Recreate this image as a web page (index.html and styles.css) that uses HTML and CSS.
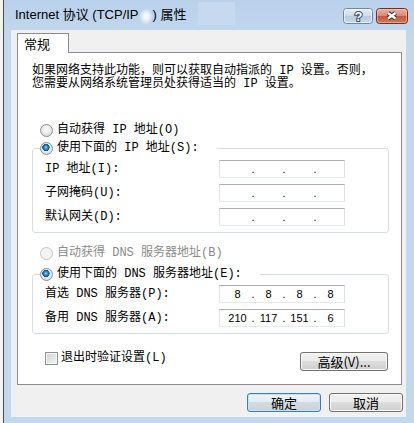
FILE: index.html
```html
<!DOCTYPE html>
<html lang="zh-CN">
<head>
    <meta charset="UTF-8">
    <title>Internet 协议 (TCP/IP) 属性</title>
    <link rel="stylesheet" href="styles.css">
</head>
<body>
<div class="window">
    <div class="titlebar">
        <span class="title">Internet 协议 (TCP/IP<span class="smudge"></span>) 属性</span>
        <span class="haze"></span>
        <span class="caption-btns">
            <span class="cap-btn">
                <svg width="30" height="16" viewBox="0 0 30 16">
                    <defs>
                        <linearGradient id="hg" x1="0" y1="0" x2="0" y2="1">
                            <stop offset="0" stop-color="#e6eef8"/>
                            <stop offset=".48" stop-color="#cfdcec"/>
                            <stop offset=".52" stop-color="#b6cae2"/>
                            <stop offset="1" stop-color="#cbdaed"/>
                        </linearGradient>
                    </defs>
                    <rect x=".5" y=".5" width="29" height="15" rx="3" fill="url(#hg)" stroke="#6f86a3"/>
                    <rect x="1.5" y="1.5" width="27" height="13" rx="2" fill="none" stroke="#fff" stroke-opacity=".6"/>
                    <text x="15.5" y="12.5" text-anchor="middle" font-family="Liberation Sans" font-weight="bold" font-size="13" fill="#fff" stroke="#3d4a5c" stroke-width="2" paint-order="stroke">?</text>
                </svg>
            </span>
            <span class="cap-btn">
                <svg width="32" height="16" viewBox="0 0 32 16">
                    <defs>
                        <linearGradient id="cg" x1="0" y1="0" x2="0" y2="1">
                            <stop offset="0" stop-color="#ebb3a6"/>
                            <stop offset=".48" stop-color="#d98a78"/>
                            <stop offset=".52" stop-color="#c65841"/>
                            <stop offset="1" stop-color="#d77a55"/>
                        </linearGradient>
                    </defs>
                    <rect x=".5" y=".5" width="31" height="15" rx="3" fill="url(#cg)" stroke="#6e3129"/>
                    <rect x="1.5" y="1.5" width="29" height="13" rx="2" fill="none" stroke="#f7d0c6" stroke-opacity=".5"/>
                    <path d="M12 5 L19.5 10.5 M19.5 5 L12 10.5" stroke="#43231e" stroke-width="4.4"/>
                    <path d="M12 5 L19.5 10.5 M19.5 5 L12 10.5" stroke="#fff" stroke-width="2.4"/>
                </svg>
            </span>
        </span>
    </div>
    <div class="client">
        <div class="tabs"><span class="tab">常规</span></div>
        <div class="panel">
            <p class="desc">如果网络支持此功能，则可以获取自动指派的 IP 设置。否则，<br>您需要从网络系统管理员处获得适当的 IP 设置。</p>

            <label class="opt first"><span class="radio"></span>自动获得 IP 地址(O)</label>
            <fieldset class="group ip">
                <legend><label class="opt"><span class="radio on"></span>使用下面的 IP 地址(S):</label></legend>
                <div class="field"><span>IP 地址(I):</span><span class="ipbox"><span class="seg"></span><span class="dot">.</span><span class="seg"></span><span class="dot">.</span><span class="seg"></span><span class="dot">.</span><span class="seg"></span></span></div>
                <div class="field"><span>子网掩码(U):</span><span class="ipbox"><span class="seg"></span><span class="dot">.</span><span class="seg"></span><span class="dot">.</span><span class="seg"></span><span class="dot">.</span><span class="seg"></span></span></div>
                <div class="field"><span>默认网关(D):</span><span class="ipbox"><span class="seg"></span><span class="dot">.</span><span class="seg"></span><span class="dot">.</span><span class="seg"></span><span class="dot">.</span><span class="seg"></span></span></div>
            </fieldset>

            <label class="opt off dns-auto"><span class="radio off"></span>自动获得 DNS 服务器地址(B)</label>
            <fieldset class="group dns">
                <legend><label class="opt"><span class="radio on"></span>使用下面的 DNS 服务器地址(E):</label></legend>
                <div class="field"><span>首选 DNS 服务器(P):</span><span class="ipbox"><span class="seg">8</span><span class="dot">.</span><span class="seg">8</span><span class="dot">.</span><span class="seg">8</span><span class="dot">.</span><span class="seg">8</span></span></div>
                <div class="field"><span>备用 DNS 服务器(A):</span><span class="ipbox"><span class="seg">210</span><span class="dot">.</span><span class="seg">117</span><span class="dot">.</span><span class="seg">151</span><span class="dot">.</span><span class="seg">6</span></span></div>
            </fieldset>

            <div class="panel-foot">
                <label class="check"><span class="box"></span>退出时验证设置(L)</label>
                <button class="btn adv">高级(V)...</button>
            </div>
        </div>
        <div class="actions">
            <button class="btn default">确定</button>
            <button class="btn">取消</button>
        </div>
    </div>
</div>
</body>
</html>
```

FILE: styles.css
```css
body {
    margin: 0;
    width: 414px;
    height: 423px;
    overflow: hidden;
    background: #f3f3f3;
    color: #000;
    font: 12px/16px "Liberation Mono", "Noto Sans CJK SC", monospace;
}

/* window frame */
.window {
    margin-left: 3px;
    height: 423px;
    border-left: 1px solid #4b4b4b;
    background: linear-gradient(#b9d1ea, #c3d8ee 40px, #c2d8ee);
}
.titlebar {
    display: flex;
    align-items: center;
    height: 28px;
    padding: 2px 6px 0 11px;
    font: 13px/16px "Liberation Sans", "Noto Sans CJK SC", sans-serif;
    white-space: nowrap;
}
.smudge {
    display: inline-block;
    width: 14px;
    height: 17px;
    vertical-align: middle;
    background: radial-gradient(ellipse at center, rgba(255,255,255,.85) 20%, rgba(255,255,255,0) 70%);
}
.haze {
    align-self: flex-start;
    width: 37px;
    height: 23px;
    margin-left: 11px;
    background: #c7d9ee;
}
.caption-btns {
    display: flex;
    gap: 3px;
    margin-left: auto;
}
.cap-btn svg {
    display: block;
}

.client {
    height: 384px;
    margin: 0 8px 0 7px;
    padding: 3px 4px 0 6px;
    background: #f0f0f0;
}

/* tab */
.tabs {
    display: flex;
}
.tab {
    position: relative;
    z-index: 1;
    width: 44px;
    height: 19px;
    padding-left: 6px;
    margin-bottom: -1px;
    border: 1px solid #898c95;
    border-bottom: 0;
    background: #fff;
    font: 13px/19px "Noto Sans CJK SC", sans-serif;
}
.panel {
    padding: 12px 12px 13px 14px;
    border: 1px solid #898c95;
    background: #fff;
}
.desc {
    margin: 0;
    line-height: 13px;
    white-space: nowrap;
}

/* radios */
.opt {
    display: flex;
    align-items: center;
    gap: 4px;
    height: 16px;
    white-space: nowrap;
}
.opt.first {
    margin: 31px 0 0 8px;
}
.opt.dns-auto {
    margin: 12px 0 0 8px;
}
.opt.off {
    color: #8b8b8b;
}
.radio {
    flex: none;
    width: 11px;
    height: 11px;
    border: 1px solid #8e8f8f;
    border-radius: 50%;
    background: radial-gradient(circle at 50% 40%, #fff, #e2e2e2 65%, #cbcbcb);
}
.radio.on {
    background:
        radial-gradient(circle at 45% 40%, #a8e2ff 0, #2b8fd8 1.6px, #0c5592 3.5px, rgba(0,0,0,0) 3.8px),
        radial-gradient(circle at 50% 40%, #fff, #e2e2e2 65%, #cbcbcb);
}
.radio.off {
    border-color: #c5c5c5;
    background: #f4f4f4;
}

/* group boxes */
.group {
    min-width: 0;
    margin: 2px 0 0;
    padding: 4px 0 6px 7px;
    border: 1px solid #d5dfe5;
    border-radius: 3px;
}
.group.dns {
    margin-top: 5px;
    padding-top: 3px;
}
.group legend {
    padding: 0 18px 0 0;
}
.field {
    display: grid;
    grid-template-columns: 174px 126px;
    height: 18px;
    margin-left: 5px;
    line-height: 18px;
    white-space: nowrap;
}
.field + .field {
    margin-top: 6px;
}
.ipbox {
    display: flex;
    height: 16px;
    padding-left: 4px;
    border: 1px solid #e3e9ef;
    border-top-color: #abadb3;
    border-left-color: #e2e3ea;
    border-right-color: #dbdfe6;
    background: #fff;
    font: 11px/16px "Liberation Sans", sans-serif;
}
.ipbox .seg {
    width: 27px;
    text-align: center;
}
.ipbox .dot {
    width: 4px;
    text-align: center;
}

/* bottom of panel */
.panel-foot {
    display: flex;
    align-items: flex-start;
    justify-content: space-between;
    height: 19px;
    margin-top: 18px;
    padding: 0 1px 0 13px;
}
.check {
    display: flex;
    align-items: center;
    gap: 3px;
    height: 13px;
    line-height: 13px;
}
.check .box {
    width: 9px;
    height: 9px;
    border: 1px solid #8e8f8f;
    background: linear-gradient(135deg, #cfd2d6, #f4f4f4);
    box-shadow: inset 0 0 0 1px #f6f6f6;
    padding: 1px;
    background-clip: content-box;
}

/* buttons */
.btn {
    box-sizing: border-box;
    width: 74px;
    height: 19px;
    padding: 0;
    border: 1px solid #707070;
    border-radius: 3px;
    background: linear-gradient(#f2f2f2, #ebebeb 50%, #dddddd 50%, #cfcfcf);
    box-shadow: inset 0 0 0 1px #fbfbfb;
    color: #000;
    font: 13px/17px "Noto Sans CJK SC", sans-serif;
}
.btn.adv {
    width: 88px;
}
.btn.default {
    border-color: #3c7fb1;
    background: linear-gradient(#eef4f8, #e4ebf0 50%, #d3dbe1 50%, #c9d3da);
    box-shadow: inset 0 0 0 1px #c4e2f7;
}
.actions {
    display: flex;
    justify-content: flex-end;
    gap: 8px;
    margin: 8px -1px 0 0;
}
```
